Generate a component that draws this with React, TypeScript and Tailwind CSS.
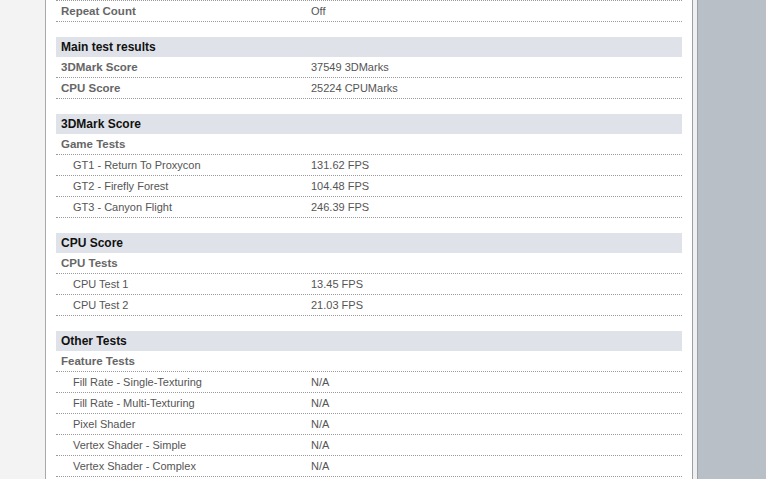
type Row = { label: string; value?: string; kind?: "sub" | "item" | "plain" };

type Section = { title: string; rows: Row[] };

const sections: Section[] = [
  {
    title: "Main test results",
    rows: [
      { label: "3DMark Score", value: "37549 3DMarks", kind: "plain" },
      { label: "CPU Score", value: "25224 CPUMarks", kind: "plain" },
    ],
  },
  {
    title: "3DMark Score",
    rows: [
      { label: "Game Tests", kind: "sub" },
      { label: "GT1 - Return To Proxycon", value: "131.62 FPS", kind: "item" },
      { label: "GT2 - Firefly Forest", value: "104.48 FPS", kind: "item" },
      { label: "GT3 - Canyon Flight", value: "246.39 FPS", kind: "item" },
    ],
  },
  {
    title: "CPU Score",
    rows: [
      { label: "CPU Tests", kind: "sub" },
      { label: "CPU Test 1", value: "13.45 FPS", kind: "item" },
      { label: "CPU Test 2", value: "21.03 FPS", kind: "item" },
    ],
  },
  {
    title: "Other Tests",
    rows: [
      { label: "Feature Tests", kind: "sub" },
      { label: "Fill Rate - Single-Texturing", value: "N/A", kind: "item" },
      { label: "Fill Rate - Multi-Texturing", value: "N/A", kind: "item" },
      { label: "Pixel Shader", value: "N/A", kind: "item" },
      { label: "Vertex Shader - Simple", value: "N/A", kind: "item" },
      { label: "Vertex Shader - Complex", value: "N/A", kind: "item" },
    ],
  },
];

function ResultRow({ row }: { row: Row }) {
  const labelCls =
    row.kind === "item"
      ? "pl-[17px] text-[11px] text-[#555]"
      : "pl-[5px] text-[11.5px] font-bold text-[#666]";
  return (
    <div className="grid h-[21px] grid-cols-[255px_1fr] items-center border-b border-dotted border-[#9a9a9a]">
      <span className={labelCls}>{row.label}</span>
      <span className="text-[11px] text-[#555]">{row.value}</span>
    </div>
  );
}

export default function App() {
  return (
    <div className="flex h-[479px] w-[766px] overflow-hidden bg-[#b9bfc7] font-['Liberation_Sans',Arial,sans-serif] leading-5">
      <div className="w-[46px] shrink-0 border-r border-[#a8a8a8] bg-[#f3f3f3]" />

      <div className="w-[646px] shrink-0 bg-white px-[10px]">
        <div className="grid h-[22px] grid-cols-[255px_1fr] items-center border-y border-dotted border-[#9a9a9a]">
          <span className="pl-[5px] text-[11.5px] font-bold text-[#666]">Repeat Count</span>
          <span className="text-[11px] text-[#555]">Off</span>
        </div>

        {sections.map((s) => (
          <div key={s.title} className="mt-[15px]">
            <div className="h-5 bg-[#dfe2e8] pl-[5px] text-[12px] font-bold text-[#111]">{s.title}</div>
            {s.rows.map((r) => (
              <ResultRow key={r.label} row={r} />
            ))}
          </div>
        ))}
      </div>

      <div className="w-[6px] shrink-0 border-x border-[#a0a0a0] bg-[#eef0f3]" />
    </div>
  );
}
